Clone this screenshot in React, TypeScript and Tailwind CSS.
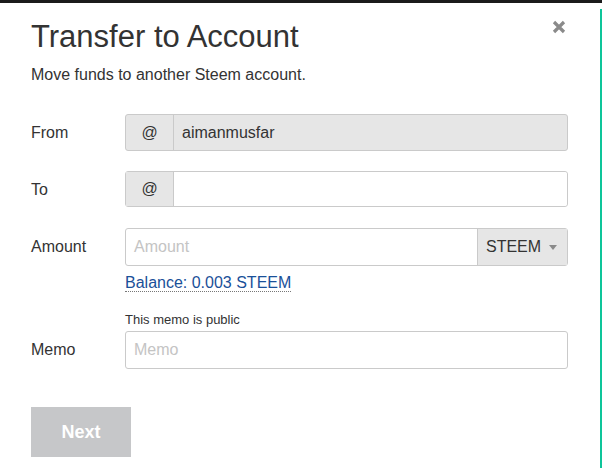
import React from 'react';

const Field = ({ label, children }: { label: string; children: React.ReactNode }) => (
  <div className="flex items-start">
    <div className="w-[94px] shrink-0 text-[16px] leading-[37px]">{label}</div>
    <div className="flex-1">{children}</div>
  </div>
);

const App = () => {
  return (
    <div className="w-[602px] h-[468px] bg-white overflow-hidden font-['Liberation_Sans',Arial,sans-serif] text-[#333]">
      <div className="h-[3px] bg-[#1b1b1b]" />
      <div className="flex h-[465px]">
        {/* Modal body */}
        <div className="relative w-[600px] px-[31px] pt-[17px]">
          <button className="absolute left-[552px] top-[17px] w-[14px] h-[14px]">
            <svg width="14" height="14" viewBox="0 0 14 14">
              <path d="M2 2 L12 12 M12 2 L2 12" stroke="#8a8a8a" strokeWidth="3.2" />
            </svg>
          </button>
          <h1 className="text-[31px] leading-[33px]">Transfer to Account</h1>
          <p className="mt-[10px] text-[16px] leading-[24px]">Move funds to another Steem account.</p>

          <div className="mt-[27px] w-[537px] flex flex-col gap-[20px]">
            <Field label="From">
              <div className="flex h-[37px] border border-[#cacaca] rounded-[3px] bg-[#e6e6e6] text-[16px]">
                <div className="w-[48px] flex items-center justify-center border-r border-[#cacaca]">@</div>
                <div className="flex-1 flex items-center pl-[8px]">aimanmusfar</div>
              </div>
            </Field>
            <Field label="To">
              <div className="flex h-[36px] border border-[#cacaca] rounded-[3px] text-[16px]">
                <div className="w-[48px] flex items-center justify-center border-r border-[#cacaca] bg-[#e6e6e6]">@</div>
                <div className="flex-1 bg-white rounded-r-[3px]" />
              </div>
            </Field>
            <Field label="Amount">
              <div className="flex h-[38px] border border-[#cacaca] rounded-[3px] text-[16px]">
                <div className="flex-1 flex items-center pl-[8px] text-[#c4c4c4]">Amount</div>
                <div className="w-[90px] flex items-center justify-between pl-[8px] pr-[10px] border-l border-[#cacaca] bg-[#e6e6e6]">
                  <span>STEEM</span>
                  <svg width="8" height="5" viewBox="0 0 8 5">
                    <path d="M0 0 H8 L4 5 Z" fill="#8a8a8a" />
                  </svg>
                </div>
              </div>
              <div className="mt-[5px] text-[16px] leading-[24px]">
                <span className="text-[#1a5099] border-b border-dotted border-[#777]">Balance: 0.003 STEEM</span>
              </div>
              <div className="mt-[16px] text-[13px] leading-[18px]">This memo is public</div>
            </Field>
          </div>

          <div className="mt-[2px] w-[537px]">
            <Field label="Memo">
              <div className="flex h-[38px] border border-[#cacaca] rounded-[3px] text-[16px]">
                <div className="flex-1 flex items-center pl-[8px] text-[#c4c4c4]">Memo</div>
              </div>
            </Field>
          </div>

          <button className="mt-[38px] w-[100px] h-[50px] bg-[#c6c7c9] text-white text-[18px] font-bold">Next</button>
        </div>
        {/* Page edge behind modal */}
        <div className="w-[2px] pt-[6px] flex flex-col">
          <div className="flex-1 bg-[#0ec59a]" />
        </div>
      </div>
    </div>
  );
};

export default App;
